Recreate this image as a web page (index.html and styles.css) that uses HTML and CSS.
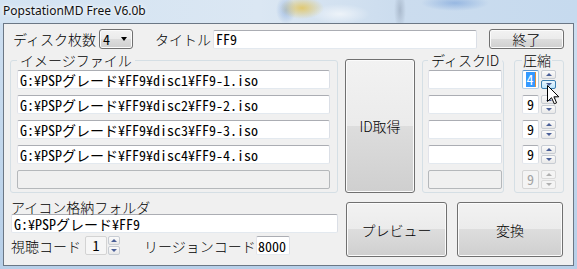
FILE: index.html
```html
<!DOCTYPE html>
<html lang="ja">
<head>
  <meta charset="utf-8">
  <title>PopstationMD Free V6.0b</title>
  <link rel="stylesheet" href="styles.css">
</head>
<body>
  <div class="frame">
    <div class="titlebar">PopstationMD Free V6.0b</div>

    <div class="client">
      <div class="top-row">
        <span class="label label-count">ディスク枚数</span>
        <div class="combo"><span>4</span><i class="combo-arrow"></i></div>
        <span class="label label-title">タイトル</span>
        <input class="text title-input" value="FF9">
        <button class="btn btn-exit">終了</button>
      </div>

      <div class="main-row">
        <fieldset class="group group-images">
          <legend>イメージファイル</legend>
          <input class="text file" value="G:¥PSPグレード¥FF9¥disc1¥FF9-1.iso">
          <input class="text file" value="G:¥PSPグレード¥FF9¥disc2¥FF9-2.iso">
          <input class="text file" value="G:¥PSPグレード¥FF9¥disc3¥FF9-3.iso">
          <input class="text file" value="G:¥PSPグレード¥FF9¥disc4¥FF9-4.iso">
          <input class="text file" disabled>
        </fieldset>

        <button class="btn btn-id">ID取得</button>

        <fieldset class="group group-ids">
          <legend>ディスクID</legend>
          <input class="text disc-id">
          <input class="text disc-id">
          <input class="text disc-id">
          <input class="text disc-id">
          <input class="text disc-id" disabled>
        </fieldset>

        <fieldset class="group group-comp">
          <legend>圧縮</legend>
          <div class="spin focused">
            <span class="spin-value"><span class="sel">4</span></span>
            <span class="spin-btns"><span class="up"></span><span class="down hover"></span></span>
          </div>
          <div class="spin">
            <span class="spin-value">9</span>
            <span class="spin-btns"><span class="up"></span><span class="down"></span></span>
          </div>
          <div class="spin">
            <span class="spin-value">9</span>
            <span class="spin-btns"><span class="up"></span><span class="down"></span></span>
          </div>
          <div class="spin">
            <span class="spin-value">9</span>
            <span class="spin-btns"><span class="up"></span><span class="down"></span></span>
          </div>
          <div class="spin disabled">
            <span class="spin-value">9</span>
            <span class="spin-btns"><span class="up"></span><span class="down"></span></span>
          </div>
        </fieldset>
      </div>

      <div class="bottom-row">
        <div class="folder">
          <div class="label folder-label">アイコン格納フォルダ</div>
          <input class="text folder-input" value="G:¥PSPグレード¥FF9">
          <div class="codes">
            <span class="label label-view">視聴コード</span>
            <div class="spin spin-view">
              <span class="spin-value">1</span>
              <span class="spin-btns"><span class="up"></span><span class="down"></span></span>
            </div>
            <span class="label label-region">リージョンコード</span>
            <input class="text region" value="8000">
          </div>
        </div>
        <button class="btn btn-preview">プレビュー</button>
        <button class="btn btn-convert">変換</button>
      </div>

      <!-- mouse pointer over the first spin button -->
      <svg class="cursor" width="13" height="20" viewBox="0 0 13 20">
        <path d="M0.5 0.5 L0.5 16.5 L4.5 12.7 L7.3 18.8 L9.6 17.8 L6.9 11.8 L11.8 11.8 Z" fill="#fff" stroke="#000" stroke-width="1"/>
      </svg>
    </div>
  </div>
</body>
</html>
```

FILE: styles.css
```css
* {
  box-sizing: border-box;
}

body {
  margin: 0;
  width: 577px;
  height: 269px;
  overflow: hidden;
  background: #b9d1ea;
  font-family: "Noto Sans CJK JP", sans-serif;
  font-size: 14px;
  font-weight: 300;
  color: #000;
}

.frame {
  position: relative;
  width: 577px;
  height: 269px;
  background: linear-gradient(180deg, #cfe0f1 0%, #b7cfe8 100%);
}

.titlebar {
  height: 23px;
  padding-left: 3px;
  font-family: "Noto Sans", sans-serif;
  font-size: 12px;
  font-weight: 400;
  line-height: 22px;
  color: #111;
  text-shadow: 0 0 6px #fff, 0 0 3px #fff;
  background:
    radial-gradient(ellipse 22px 11px at 302px 8px, rgba(226, 196, 92, 0.85), rgba(226, 196, 92, 0) 100%),
    radial-gradient(ellipse 10px 14px at 286px 10px, rgba(110, 150, 210, 0.5), rgba(110, 150, 210, 0) 100%),
    radial-gradient(ellipse 6px 20px at 400px 10px, rgba(130, 145, 165, 0.45), rgba(130, 145, 165, 0) 100%),
    radial-gradient(ellipse 34px 8px at 455px 3px, rgba(90, 140, 210, 0.45), rgba(90, 140, 210, 0) 100%),
    radial-gradient(ellipse 30px 10px at 340px 14px, rgba(255, 255, 255, 0.6), rgba(255, 255, 255, 0) 100%),
    linear-gradient(90deg, #d3e3f2 0%, #dbe7f3 45%, #cbdcee 70%, #c6daee 100%);
}

.client {
  position: relative;
  margin-left: 3px;
  width: 571px;
  height: 243px;
  border: 1px solid #6b7785;
  background: #f0f0f0;
}

.label {
  line-height: 20px;
  white-space: nowrap;
}

/* top row */
.top-row {
  display: flex;
  align-items: center;
  height: 20px;
  margin: 5px 0 0 9px;
}

.label-count {
  width: 86px;
}

.combo {
  display: flex;
  align-items: center;
  justify-content: space-between;
  width: 34px;
  height: 20px;
  padding: 0 5px 0 3px;
  border: 1px solid #707070;
  border-radius: 3px;
  background: linear-gradient(180deg, #f2f2f2 0%, #ebebeb 50%, #dddddd 50%, #cfcfcf 100%);
  box-shadow: inset 0 0 0 1px #fbfbfb;
  font-family: "Noto Sans Mono CJK JP", "Liberation Mono", monospace;
  line-height: 18px;
}

.combo-arrow {
  width: 0;
  height: 0;
  border-left: 3.5px solid transparent;
  border-right: 3.5px solid transparent;
  border-top: 4px solid #000;
}

.label-title {
  width: 58px;
  margin-left: 22px;
}

.title-input {
  width: 264px;
  height: 20px;
}

.btn {
  padding: 0;
  border: 1px solid #707070;
  border-radius: 3px;
  background: linear-gradient(180deg, #f2f2f2 0%, #ebebeb 50%, #dddddd 50%, #cfcfcf 100%);
  box-shadow: inset 0 0 0 1px #fbfbfb;
  font-family: "Noto Sans CJK JP", sans-serif;
  font-size: 14px;
  font-weight: 300;
  color: #000;
}

.btn-exit {
  width: 75px;
  height: 20px;
  margin-left: 12px;
  line-height: 16px;
}

/* text boxes */
.text {
  display: block;
  height: 19px;
  padding: 0 2px;
  border: 1px solid;
  border-color: #abadb3 #dbdfe6 #e3e9ef #e2e3ea;
  border-radius: 2px;
  background: #fff;
  font-family: "Noto Sans Mono CJK JP", "Liberation Mono", monospace;
  font-size: 14px;
  font-weight: 400;
  color: #000;
  outline: none;
}

.text:disabled {
  background: #f0f0f0;
  border-color: #b5b8bb;
}

/* middle row */
.main-row {
  display: flex;
  align-items: flex-start;
  height: 140px;
  margin: 4px 0 0 6px;
}

.group {
  height: 140px;
  margin: 0;
  padding: 3px 0 0 6px;
  border: 1px solid #d5dfe5;
  border-radius: 3px;
}

.group legend {
  padding: 0 3px;
  font-size: 14px;
  line-height: 14px;
}

.group .text,
.group .spin {
  margin-bottom: 6px;
}

.group-images {
  width: 328px;
}

.file {
  width: 313px;
}

.btn-id {
  width: 70px;
  height: 134px;
  margin: 6px 0 0 7px;
}

.group-ids {
  width: 82px;
  margin-left: 7px;
  padding-left: 5px;
}

.disc-id {
  width: 74px;
}

.group-comp {
  width: 50px;
  margin-left: 10px;
  padding-left: 7px;
}

.group-comp legend {
  padding: 0 1px;
}

/* spin edits */
.spin {
  display: flex;
  gap: 2px;
  height: 19px;
}

.spin-value {
  display: flex;
  align-items: center;
  justify-content: center;
  width: 17px;
  height: 19px;
  border: 1px solid;
  border-color: #abadb3 #dbdfe6 #e3e9ef #e2e3ea;
  border-radius: 2px;
  background: #fff;
  font-family: "Noto Sans Mono CJK JP", "Liberation Mono", monospace;
  font-weight: 400;
  line-height: 15px;
}

.spin-btns {
  display: flex;
  flex-direction: column;
  gap: 1px;
  width: 15px;
}

.spin-btns span {
  flex: 1;
  display: flex;
  align-items: center;
  justify-content: center;
  border: 1px solid #c7ccd3;
  border-radius: 2px;
  background: linear-gradient(180deg, #fbfbfb 0%, #e8e8e8 100%);
}

.spin-btns .up::before,
.spin-btns .down::before {
  content: "";
  border-left: 3px solid transparent;
  border-right: 3px solid transparent;
}

.spin-btns .up::before {
  border-bottom: 3px solid #4a5f97;
}

.spin-btns .down::before {
  border-top: 3px solid #4a5f97;
}

.spin-btns .hover {
  border-color: #3c7fb1;
  background: linear-gradient(180deg, #eaf6fd 0%, #bee6fd 100%);
}

.focused .spin-value {
  border-color: #5c93c9 #a4c9e3 #b5cfe7 #a4c9e3;
}

.sel {
  padding: 0 1px;
  background: #3399ff;
  color: #fff;
  line-height: 15px;
  border-right: 1px solid #e69138;
}

.disabled .spin-value {
  color: #a3a3a3;
  border-color: #d5d5d5;
  background: #f4f4f4;
}

.disabled .spin-btns span {
  border-color: #dadada;
  background: #f4f4f4;
}

.disabled .spin-btns .up::before {
  border-bottom-color: #b0b0b0;
}

.disabled .spin-btns .down::before {
  border-top-color: #b0b0b0;
}

/* bottom row */
.bottom-row {
  display: flex;
  align-items: flex-start;
  margin: 7px 0 0 7px;
}

.folder {
  width: 327px;
}

.folder-label {
  line-height: 14px;
  height: 14px;
}

.folder-input {
  width: 327px;
}

.codes {
  display: flex;
  align-items: center;
  height: 19px;
  margin-top: 3px;
}

.label-view {
  width: 74px;
}

.spin-view {
  gap: 1px;
}

.spin-view .spin-value {
  width: 22px;
  background: #f6f6f6;
  border-color: #d3d3d3;
}

.spin-view .spin-btns {
  width: 12px;
}

.label-region {
  width: 112px;
  margin-left: 24px;
}

.region {
  width: 34px;
  padding: 0 1px;
}

.btn-preview {
  width: 101px;
  height: 55px;
  margin: 2px 0 0 8px;
}

.btn-convert {
  width: 106px;
  height: 55px;
  margin: 2px 0 0 10px;
}

.cursor {
  position: absolute;
  left: 543px;
  top: 61px;
}
```
